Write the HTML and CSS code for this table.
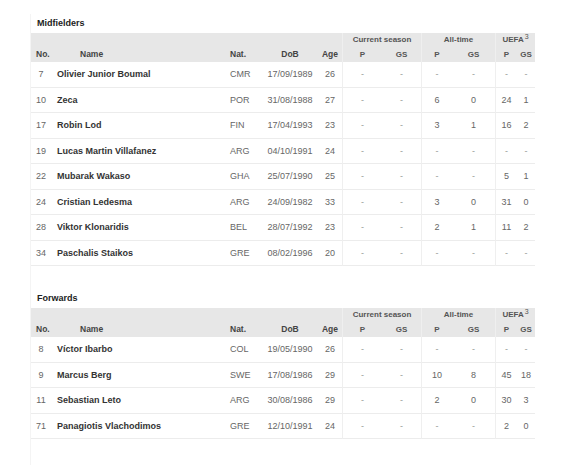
FILE: index.html
```html
<!DOCTYPE html>
<html>
<head>
<meta charset="utf-8">
<link rel="stylesheet" href="styles.css">
</head>
<body>
<div class="page">
  <section class="squad">
    <h3 class="pos">Midfielders</h3>
    <table class="tbl">
      <colgroup>
        <col class="c-no"><col class="c-name"><col class="c-nat"><col class="c-dob"><col class="c-age">
        <col class="c-csp"><col class="c-csg"><col class="c-atp"><col class="c-atg"><col class="c-up"><col class="c-ug">
      </colgroup>
      <thead>
        <tr class="top">
          <th rowspan="2" class="no">No.</th>
          <th rowspan="2" class="name">Name</th>
          <th rowspan="2" class="nat">Nat.</th>
          <th rowspan="2">DoB</th>
          <th rowspan="2">Age</th>
          <th colspan="2" class="g grp">Current season</th>
          <th colspan="2" class="g grp">All-time</th>
          <th colspan="2" class="g grp">UEFA<sup>3</sup></th>
        </tr>
        <tr class="sub">
          <th class="g">P</th><th>GS</th>
          <th class="g">P</th><th>GS</th>
          <th class="g">P</th><th>GS</th>
        </tr>
      </thead>
      <tbody>
        <tr><td class="num">7</td><td class="pl">Olivier Junior Boumal</td><td class="nat">CMR</td><td>17/09/1989</td><td>26</td><td class="g d">-</td><td class="d">-</td><td class="g d">-</td><td class="d">-</td><td class="g d">-</td><td class="d">-</td></tr>
        <tr><td class="num">10</td><td class="pl">Zeca</td><td class="nat">POR</td><td>31/08/1988</td><td>27</td><td class="g d">-</td><td class="d">-</td><td class="g">6</td><td>0</td><td class="g">24</td><td>1</td></tr>
        <tr><td class="num">17</td><td class="pl">Robin Lod</td><td class="nat">FIN</td><td>17/04/1993</td><td>23</td><td class="g d">-</td><td class="d">-</td><td class="g">3</td><td>1</td><td class="g">16</td><td>2</td></tr>
        <tr><td class="num">19</td><td class="pl">Lucas Martin Villafanez</td><td class="nat">ARG</td><td>04/10/1991</td><td>24</td><td class="g d">-</td><td class="d">-</td><td class="g d">-</td><td class="d">-</td><td class="g d">-</td><td class="d">-</td></tr>
        <tr><td class="num">22</td><td class="pl">Mubarak Wakaso</td><td class="nat">GHA</td><td>25/07/1990</td><td>25</td><td class="g d">-</td><td class="d">-</td><td class="g d">-</td><td class="d">-</td><td class="g">5</td><td>1</td></tr>
        <tr><td class="num">24</td><td class="pl">Cristian Ledesma</td><td class="nat">ARG</td><td>24/09/1982</td><td>33</td><td class="g d">-</td><td class="d">-</td><td class="g">3</td><td>0</td><td class="g">31</td><td>0</td></tr>
        <tr><td class="num">28</td><td class="pl">Viktor Klonaridis</td><td class="nat">BEL</td><td>28/07/1992</td><td>23</td><td class="g d">-</td><td class="d">-</td><td class="g">2</td><td>1</td><td class="g">11</td><td>2</td></tr>
        <tr><td class="num">34</td><td class="pl">Paschalis Staikos</td><td class="nat">GRE</td><td>08/02/1996</td><td>20</td><td class="g d">-</td><td class="d">-</td><td class="g d">-</td><td class="d">-</td><td class="g d">-</td><td class="d">-</td></tr>
      </tbody>
    </table>
  </section>

  <section class="squad second">
    <h3 class="pos">Forwards</h3>
    <table class="tbl">
      <colgroup>
        <col class="c-no"><col class="c-name"><col class="c-nat"><col class="c-dob"><col class="c-age">
        <col class="c-csp"><col class="c-csg"><col class="c-atp"><col class="c-atg"><col class="c-up"><col class="c-ug">
      </colgroup>
      <thead>
        <tr class="top">
          <th rowspan="2" class="no">No.</th>
          <th rowspan="2" class="name">Name</th>
          <th rowspan="2" class="nat">Nat.</th>
          <th rowspan="2">DoB</th>
          <th rowspan="2">Age</th>
          <th colspan="2" class="g grp">Current season</th>
          <th colspan="2" class="g grp">All-time</th>
          <th colspan="2" class="g grp">UEFA<sup>3</sup></th>
        </tr>
        <tr class="sub">
          <th class="g">P</th><th>GS</th>
          <th class="g">P</th><th>GS</th>
          <th class="g">P</th><th>GS</th>
        </tr>
      </thead>
      <tbody>
        <tr><td class="num">8</td><td class="pl">Víctor Ibarbo</td><td class="nat">COL</td><td>19/05/1990</td><td>26</td><td class="g d">-</td><td class="d">-</td><td class="g d">-</td><td class="d">-</td><td class="g d">-</td><td class="d">-</td></tr>
        <tr><td class="num">9</td><td class="pl">Marcus Berg</td><td class="nat">SWE</td><td>17/08/1986</td><td>29</td><td class="g d">-</td><td class="d">-</td><td class="g">10</td><td>8</td><td class="g">45</td><td>18</td></tr>
        <tr><td class="num">11</td><td class="pl">Sebastian Leto</td><td class="nat">ARG</td><td>30/08/1986</td><td>29</td><td class="g d">-</td><td class="d">-</td><td class="g">2</td><td>0</td><td class="g">30</td><td>3</td></tr>
        <tr><td class="num">71</td><td class="pl">Panagiotis Vlachodimos</td><td class="nat">GRE</td><td>12/10/1991</td><td>24</td><td class="g d">-</td><td class="d">-</td><td class="g d">-</td><td class="d">-</td><td class="g">2</td><td>0</td></tr>
      </tbody>
    </table>
  </section>
</div>
</body>
</html>
```

FILE: styles.css
```css
html, body {
  margin: 0;
  padding: 0;
  background: #ffffff;
}

body {
  font-family: "Liberation Sans", Arial, sans-serif;
  color: #555;
}

.page {
  margin-left: 30px;
  border-left: 1px solid #f4f4f4;
  min-height: 465px;
  box-sizing: border-box;
}

.squad {
  width: 504px;
}

.pos {
  margin: 14px 0 0 0;
  padding-left: 6px;
  height: 19px;
  line-height: 19px;
  font-size: 9px;
  font-weight: bold;
  color: #222;
}

.second .pos {
  margin-top: 23px;
}

.tbl {
  width: 504px;
  table-layout: fixed;
  border-collapse: separate;
  border-spacing: 0;
  font-size: 9px;
}

.c-no { width: 20px; }
.c-name { width: 175px; }
.c-nat { width: 36px; }
.c-dob { width: 56px; }
.c-age { width: 24px; }
.c-csp { width: 40px; }
.c-csg { width: 39px; }
.c-atp { width: 31px; }
.c-atg { width: 43px; }
.c-up { width: 22px; }
.c-ug { width: 18px; }

.tbl th {
  background: #e7e7e7;
  color: #444;
  font-weight: bold;
  font-size: 8.5px;
  padding: 0;
  text-align: center;
  white-space: nowrap;
}

.tbl thead tr.top th {
  height: 14px;
  line-height: 15px;
  vertical-align: bottom;
}

.tbl thead tr.top th.grp {
  font-size: 8px;
  color: #555;
  vertical-align: middle;
  line-height: 14px;
}

.tbl thead tr.sub th {
  height: 15px;
  line-height: 15px;
  font-size: 8px;
  color: #555;
  vertical-align: middle;
}

.tbl th.no {
  text-align: left;
  padding-left: 5px;
}

.tbl th.name {
  text-align: left;
  padding-left: 29px;
}

.tbl th.nat {
  text-align: left;
  padding-left: 4px;
}

.tbl sup {
  font-size: 7px;
  line-height: 0;
  vertical-align: 3px;
  font-weight: normal;
  margin-left: 1px;
}

.tbl td {
  height: 24.5px;
  padding: 0;
  line-height: 12px;
  text-align: center;
  color: #666;
  border-bottom: 1px solid #ececec;
  white-space: nowrap;
}

.tbl td.num {
  text-align: center;
}

.tbl td.pl {
  text-align: left;
  padding-left: 6px;
  font-weight: bold;
  color: #333;
}

.tbl td.nat {
  text-align: left;
  padding-left: 4px;
}

.tbl td.d {
  color: #999;
}

.tbl .g {
  border-left: 1px solid #efefef;
}
```
